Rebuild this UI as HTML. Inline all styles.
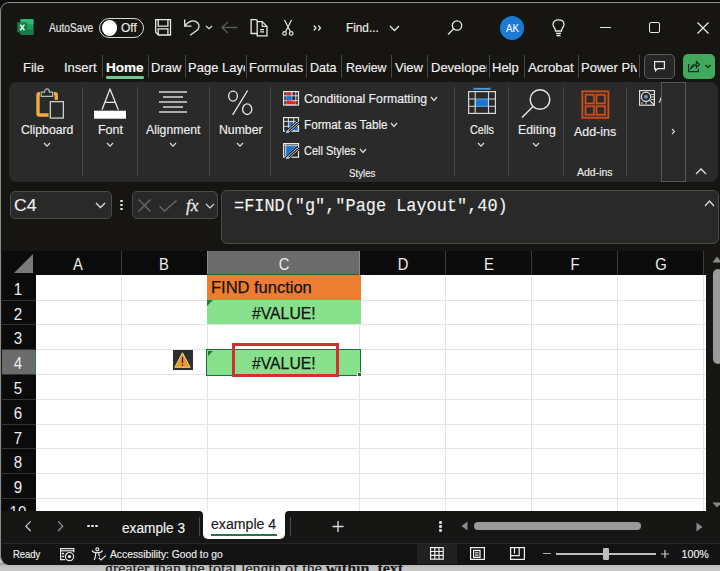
<!DOCTYPE html>
<html><head><meta charset="utf-8">
<style>
*{margin:0;padding:0;box-sizing:border-box}
html,body{width:720px;height:571px;overflow:hidden;background:#c8c8c8}
body{position:relative;font-family:"Liberation Sans",sans-serif;color:#fff}
.a{position:absolute}
.t{position:absolute;white-space:nowrap;line-height:1;-webkit-text-stroke:0.15px currentColor}
svg{position:absolute;overflow:visible}
</style></head><body>
<div class="a" style="left:0px;top:563px;width:720px;height:8px;background:linear-gradient(#8a8a8a,#c0c0c0 35%,#c8c8c8);"></div>
<div class="t" style="left:105.00px;top:560.80px;font-size:16px;color:#151515;font-weight:400;font-family:'Liberation Serif';">greater than the total length of the <b>within_text.</b></div>
<div class="a" style="left:0px;top:0px;width:720px;height:40px;background:#0a0a0a;"></div>
<div class="a" style="left:0;top:2px;width:740px;height:563px;background:#171512;border-radius:9px 0 0 9px;border-top:1.2px solid #8f8f8f;border-left:1.5px solid #8a8a8a"></div>
<svg style="left:17px;top:19px" width="17" height="16" viewBox="0 0 17 16" ><rect x="3.5" y="0" width="13" height="16" rx="1.2" fill="#1f9a5c"/>
<rect x="3.5" y="0" width="13" height="5.3" rx="1" fill="#2fb874"/>
<rect x="3.5" y="10.7" width="13" height="5.3" rx="1" fill="#177a45"/>
<rect x="0.3" y="3.2" width="10" height="10.4" rx="1.2" fill="#138048"/>
<path d="M3.2 5.6 L7.4 11.2 M7.4 5.6 L3.2 11.2" stroke="#e8fff0" stroke-width="1.5"/></svg>
<div class="t" style="left:49.00px;top:21.84px;font-size:12px;color:#e6e6e6;font-weight:400;font-family:'Liberation Sans';transform:scaleX(0.85);transform-origin:0 0;">AutoSave</div>
<div class="a" style="left:99px;top:18px;width:44.5px;height:20px;border:1.3px solid #d8d8d8;border-radius:10px"></div>
<div class="a" style="left:101.8px;top:20.3px;width:15.4px;height:15.4px;background:#fff;border-radius:50%"></div>
<div class="t" style="left:121.00px;top:21.84px;font-size:12px;color:#eaeaea;font-weight:400;font-family:'Liberation Sans';">Off</div>
<svg style="left:155px;top:19px" width="17" height="17" viewBox="0 0 17 17" fill="none" stroke="#e8e8e8" stroke-width="1.3"><path d="M0.7 0.7 H15.5 V16 H3.5 L0.7 13.2 Z"/><path d="M3.2 0.7 V7.2 H12.9 V0.7"/><path d="M3.2 16 V9.9 H12.9 V16"/></svg>
<svg style="left:183px;top:19px" width="18" height="17" viewBox="0 0 18 17" fill="none" stroke="#e8e8e8" stroke-width="1.3"><path d="M1.7 0.4 V7.2 H8.5"/><path d="M2.3 6.7 C4.5 3 9 1.2 12.5 2.3 C16 3.5 17 7.5 15 10.5 L7.2 16.2"/></svg>
<svg style="left:204.5px;top:24.7px" width="8" height="4.8" viewBox="0 0 8 4.8" fill="none" stroke="#e0e0e0" stroke-width="1.2"><path d="M1 1 L4.0 3.8 L7 1"/></svg>
<svg style="left:221px;top:21px" width="17" height="13" viewBox="0 0 17 13" fill="none" stroke="#5a5a5a" stroke-width="1.3"><path d="M7 1 L1 6.5 L7 12 M1 6.5 H16.5"/></svg>
<svg style="left:250px;top:19px" width="18" height="17" viewBox="0 0 18 17" fill="none" stroke="#e8e8e8" stroke-width="1.3"><path d="M7.2 14.5 H1.1 V0.6 H5.5 Q7.2 0.6 7.2 2.3"/><path d="M7.2 2.6 H12.2 L17 7.4 V16.8 H7.2 Z"/><path d="M12.2 2.6 V7.4 H17" stroke-width="1.1"/><path d="M10 10.7 H14 M10 12.9 H14" stroke-width="1.2"/></svg>
<svg style="left:282px;top:19px" width="12" height="17" viewBox="0 0 12 17" fill="none" stroke="#e8e8e8" stroke-width="1.2"><path d="M2.5 1 L8.3 12.6 M9.5 1 L3.7 12.6"/><circle cx="2.6" cy="14.4" r="1.8"/><circle cx="9.2" cy="14.4" r="1.8"/></svg>
<svg style="left:313px;top:25px" width="9" height="6" viewBox="0 0 9 6" fill="none" stroke="#e8e8e8" stroke-width="1.2"><path d="M0.8 0.5 L3 3 L0.8 5.5 M5.3 0.5 L7.5 3 L5.3 5.5"/></svg>
<div class="t" style="left:346.00px;top:22.34px;font-size:12px;color:#ececec;font-weight:400;font-family:'Liberation Sans';transform:scaleX(0.98);transform-origin:0 0;">Find...</div>
<svg style="left:389px;top:25px" width="11" height="7" viewBox="0 0 11 7" fill="none" stroke="#e8e8e8" stroke-width="1.3"><path d="M1 1 L5.5 5.5 L10 1"/></svg>
<svg style="left:447px;top:20px" width="16" height="15" viewBox="0 0 16 15" fill="none" stroke="#e8e8e8" stroke-width="1.3"><circle cx="10" cy="5.5" r="4.7"/><path d="M6.6 8.9 L1 14.5"/></svg>
<div class="a" style="left:499.8px;top:15.8px;width:24.4px;height:24.4px;background:#1a7ad6;border-radius:50%"></div>
<div class="t" style="left:505.50px;top:22.69px;font-size:11px;color:#f4f8ff;font-weight:400;font-family:'Liberation Sans';transform:scaleX(0.88);transform-origin:0 0;">AK</div>
<svg style="left:552px;top:19px" width="13" height="18" viewBox="0 0 13 18" fill="none" stroke="#e8e8e8" stroke-width="1.3"><path d="M3.5 12 C3.5 9 1 8 1 5.5 C1 2.5 3.5 0.8 6.5 0.8 C9.5 0.8 12 2.5 12 5.5 C12 8 9.5 9 9.5 12 Z"/><path d="M4 14.3 H9 M4.5 16.5 H8.5"/></svg>
<div class="a" style="left:600px;top:26.5px;width:11px;height:1.3px;background:#e8e8e8;"></div>
<div class="a" style="left:648.5px;top:22px;width:11.3px;height:11px;border:1.3px solid #e8e8e8;border-radius:2px"></div>
<svg style="left:697px;top:22px" width="12" height="12" viewBox="0 0 12 12" fill="none" stroke="#e8e8e8" stroke-width="1.3"><path d="M0.5 0.5 L11.5 11.5 M11.5 0.5 L0.5 11.5"/></svg>
<div class="t" style="left:23.00px;top:61.30px;font-size:13px;color:#efefef;font-weight:400;font-family:'Liberation Sans';">File</div>
<div class="t" style="left:64.00px;top:61.30px;font-size:13px;color:#efefef;font-weight:400;font-family:'Liberation Sans';">Insert</div>
<div class="a" style="left:102px;top:55px;width:1px;height:23px;background:#464646;"></div>
<div class="t" style="left:106.00px;top:61.30px;font-size:13px;color:#ffffff;font-weight:700;font-family:'Liberation Sans';transform:scaleX(1.04);transform-origin:0 0;">Home</div>
<div class="a" style="left:148px;top:55px;width:1px;height:23px;background:#464646;"></div>
<div class="t" style="left:151.00px;top:61.30px;font-size:13px;color:#efefef;font-weight:400;font-family:'Liberation Sans';">Draw</div>
<div class="a" style="left:185px;top:55px;width:1px;height:23px;background:#464646;"></div>
<div class="a" style="left:188px;top:55px;width:57px;height:25px;overflow:hidden">
<div class="t" style="left:0.00px;top:6.30px;font-size:13px;color:#efefef;font-weight:400;font-family:'Liberation Sans';">Page Layout</div>
</div>
<div class="a" style="left:246px;top:55px;width:1px;height:23px;background:#464646;"></div>
<div class="t" style="left:249.00px;top:61.30px;font-size:13px;color:#efefef;font-weight:400;font-family:'Liberation Sans';">Formulas</div>
<div class="a" style="left:306px;top:55px;width:1px;height:23px;background:#464646;"></div>
<div class="t" style="left:310.00px;top:61.30px;font-size:13px;color:#efefef;font-weight:400;font-family:'Liberation Sans';transform:scaleX(0.96);transform-origin:0 0;">Data</div>
<div class="a" style="left:341px;top:55px;width:1px;height:23px;background:#464646;"></div>
<div class="t" style="left:346.00px;top:61.30px;font-size:13px;color:#efefef;font-weight:400;font-family:'Liberation Sans';transform:scaleX(0.95);transform-origin:0 0;">Review</div>
<div class="a" style="left:391px;top:55px;width:1px;height:23px;background:#464646;"></div>
<div class="t" style="left:395.00px;top:61.30px;font-size:13px;color:#efefef;font-weight:400;font-family:'Liberation Sans';">View</div>
<div class="a" style="left:427px;top:55px;width:1px;height:23px;background:#464646;"></div>
<div class="a" style="left:431px;top:55px;width:56px;height:25px;overflow:hidden">
<div class="t" style="left:0.00px;top:6.30px;font-size:13px;color:#efefef;font-weight:400;font-family:'Liberation Sans';">Developer</div>
</div>
<div class="a" style="left:489px;top:55px;width:1px;height:23px;background:#464646;"></div>
<div class="t" style="left:492.00px;top:61.30px;font-size:13px;color:#efefef;font-weight:400;font-family:'Liberation Sans';">Help</div>
<div class="a" style="left:524px;top:55px;width:1px;height:23px;background:#464646;"></div>
<div class="t" style="left:528.00px;top:61.30px;font-size:13px;color:#efefef;font-weight:400;font-family:'Liberation Sans';transform:scaleX(1.02);transform-origin:0 0;">Acrobat</div>
<div class="a" style="left:578px;top:55px;width:1px;height:23px;background:#464646;"></div>
<div class="a" style="left:581px;top:55px;width:56px;height:25px;overflow:hidden">
<div class="t" style="left:0.00px;top:6.30px;font-size:13px;color:#efefef;font-weight:400;font-family:'Liberation Sans';">Power Pivot</div>
</div>
<div class="a" style="left:639px;top:55px;width:1px;height:23px;background:#464646;"></div>
<div class="a" style="left:106px;top:76.3px;width:38px;height:2.3px;background:#74c692;border-radius:1.2px"></div>
<div class="a" style="left:644px;top:54px;width:31px;height:25px;border:1px solid #5a5a5a;border-radius:5px;background:#262626"></div>
<svg style="left:654px;top:61px" width="11" height="11" viewBox="0 0 11 11" fill="none" stroke="#ececec" stroke-width="1.2"><path d="M0.6 0.6 H10.4 V7.6 H3.5 L1.5 9.8 V7.6 H0.6 Z"/></svg>
<div class="a" style="left:683px;top:54px;width:31.5px;height:25px;background:#40a95d;border-radius:5px"></div>
<svg style="left:688px;top:60px" width="24" height="13" viewBox="0 0 24 13" fill="none" stroke="#15301e" stroke-width="1.2"><path d="M0.6 4 V11.6 H10.4 V9"/><path d="M2.5 9.5 C3 6 5.5 4 8.5 4 V1.5 L11.5 4.5 L8.5 7.5 V5.5 C6 5.5 4 7 2.5 9.5 Z"/><path d="M17.5 5 L20 7.5 L22.5 5" stroke-width="1.3"/></svg>
<div class="a" style="left:9px;top:82px;width:709px;height:100px;background:#2a2a2a;border-radius:8px"></div>
<div class="a" style="left:82px;top:87px;width:1px;height:89px;background:#464646;"></div>
<div class="a" style="left:137px;top:87px;width:1px;height:89px;background:#464646;"></div>
<div class="a" style="left:209px;top:87px;width:1px;height:89px;background:#464646;"></div>
<div class="a" style="left:270px;top:87px;width:1px;height:89px;background:#464646;"></div>
<div class="a" style="left:454px;top:87px;width:1px;height:89px;background:#464646;"></div>
<div class="a" style="left:508px;top:87px;width:1px;height:89px;background:#464646;"></div>
<div class="a" style="left:563px;top:87px;width:1px;height:89px;background:#464646;"></div>
<div class="a" style="left:626px;top:87px;width:1px;height:89px;background:#464646;"></div>
<svg style="left:36px;top:88px" width="29" height="31" viewBox="0 0 29 31" fill="none"><rect x="2" y="5.7" width="18.3" height="21.3" rx="1.2" stroke="#eeac45" stroke-width="3.4"/>
<rect x="14.35" y="13.65" width="13" height="16.4" stroke="#2a2a2a" stroke-width="3.5" fill="#2a2a2a"/>
<rect x="14.35" y="13.65" width="13" height="16.4" stroke="#cfcfcf" stroke-width="1.3" fill="#2a2a2a"/>
<path d="M5.2 8.3 V4.2 H8.6 C8.6 1.8 9.8 0.9 11 0.9 C12.2 0.9 13.4 1.8 13.4 4.2 H16.6 V8.3 Z" stroke="#2a2a2a" stroke-width="2.5" fill="#2a2a2a"/>
<path d="M5.2 8.3 V4.2 H8.6 C8.6 1.8 9.8 0.9 11 0.9 C12.2 0.9 13.4 1.8 13.4 4.2 H16.6 V8.3 Z" stroke="#b8b8b8" stroke-width="1.2" fill="#2a2a2a"/></svg>
<div class="t" style="left:21.00px;top:124.04px;font-size:12px;color:#f0f0f0;font-weight:400;font-family:'Liberation Sans';transform:scaleX(1.02);transform-origin:0 0;">Clipboard</div>
<svg style="left:43.2px;top:141.6px" width="8" height="5.2" viewBox="0 0 8 5.2" fill="none" stroke="#dcdcdc" stroke-width="1.2"><path d="M1 1 L4.0 4.2 L7 1"/></svg>
<svg style="left:94px;top:88px" width="33" height="32" viewBox="0 0 33 32" fill="none"><path d="M8 21.8 L16 1 L24.3 21.8 M10.9 14.3 H21.4" stroke="#e8e8e8" stroke-width="1.3" stroke-linejoin="round"/><rect x="0" y="22.7" width="32" height="8" fill="#fff"/></svg>
<div class="t" style="left:98.00px;top:124.04px;font-size:12px;color:#f0f0f0;font-weight:400;font-family:'Liberation Sans';transform:scaleX(1.04);transform-origin:0 0;">Font</div>
<svg style="left:106.2px;top:141.6px" width="8" height="5.2" viewBox="0 0 8 5.2" fill="none" stroke="#dcdcdc" stroke-width="1.2"><path d="M1 1 L4.0 4.2 L7 1"/></svg>
<svg style="left:159px;top:91px" width="28" height="22" viewBox="0 0 28 22" fill="none" stroke="#d8d8d8" stroke-width="1.3"><path d="M0 1 H28 M4 6 H24 M0 11 H28 M4 16 H24 M0 21 H28"/></svg>
<div class="t" style="left:145.50px;top:124.04px;font-size:12px;color:#f0f0f0;font-weight:400;font-family:'Liberation Sans';transform:scaleX(1.02);transform-origin:0 0;">Alignment</div>
<svg style="left:169.2px;top:141.6px" width="8" height="5.2" viewBox="0 0 8 5.2" fill="none" stroke="#dcdcdc" stroke-width="1.2"><path d="M1 1 L4.0 4.2 L7 1"/></svg>
<svg style="left:228px;top:90px" width="26" height="26" viewBox="0 0 26 26" fill="none" stroke="#e8e8e8" stroke-width="1.3"><ellipse cx="5" cy="6.1" rx="4.4" ry="5"/><ellipse cx="19.2" cy="19.2" rx="4.6" ry="5.3"/><path d="M19.6 0.5 L4.7 24.9"/></svg>
<div class="t" style="left:218.50px;top:124.04px;font-size:12px;color:#f0f0f0;font-weight:400;font-family:'Liberation Sans';transform:scaleX(1.02);transform-origin:0 0;">Number</div>
<svg style="left:236.2px;top:141.6px" width="8" height="5.2" viewBox="0 0 8 5.2" fill="none" stroke="#dcdcdc" stroke-width="1.2"><path d="M1 1 L4.0 4.2 L7 1"/></svg>
<svg style="left:283px;top:90.6px" width="17" height="15" viewBox="0 0 17 15" ><rect x="3.1" y="0.6" width="5.8" height="4.2" fill="#e02424" stroke="#ff7070" stroke-width="0.8"/>
<rect x="3.1" y="4.8" width="5.8" height="4.9" fill="#1f6fcf" stroke="#7ab8f5" stroke-width="0.8"/>
<rect x="3.1" y="9.7" width="9.7" height="4.3" fill="#e02424" stroke="#ff7070" stroke-width="0.8"/>
<path d="M0.6 4.8 H3.1 M8.9 4.8 H15.5 M0.6 9.7 H3.1 M8.9 9.7 H15.5 M8.9 0.6 V4.8 M12.8 0.6 V9.7" fill="none" stroke="#d8d8d8" stroke-width="1"/>
<rect x="0.6" y="0.6" width="14.9" height="13.4" fill="none" stroke="#e6e6e6" stroke-width="1.2"/></svg>
<div class="t" style="left:304.00px;top:92.89px;font-size:12.3px;color:#f0f0f0;font-weight:400;font-family:'Liberation Sans';transform:scaleX(0.995);transform-origin:0 0;">Conditional Formatting</div>
<svg style="left:430px;top:95.5px" width="8" height="5.5" viewBox="0 0 8 5.5" fill="none" stroke="#dcdcdc" stroke-width="1.2"><path d="M1 1 L4.0 4.5 L7 1"/></svg>
<svg style="left:283px;top:117px" width="17" height="15" viewBox="0 0 17 15" ><rect x="5.4" y="4.4" width="10" height="9.7" fill="#1f6fcf"/>
<path d="M0.6 4.4 H15.5 M0.6 9.3 H15.5 M5.4 0.6 V14.2 M10.7 0.6 V14.2" fill="none" stroke="#d8d8d8" stroke-width="1"/>
<rect x="0.6" y="0.6" width="14.9" height="13.6" fill="none" stroke="#e6e6e6" stroke-width="1.2"/>
<path d="M2.5 14.8 L14.2 4.2 L16.3 6.4 L5 16.8 Z" fill="#2a2a2a" stroke="#111" stroke-width="1.2"/>
<path d="M3.5 14.6 L14.2 5 L15.6 6.4 L5.2 15.8 Z" fill="#222" stroke="#e8e8e8" stroke-width="0.9"/>
<path d="M2.6 15.2 L5 12.9 L6.3 14.3 L3.8 16.6 Z" fill="#8cc4ff"/></svg>
<div class="t" style="left:304.00px;top:118.89px;font-size:12.3px;color:#f0f0f0;font-weight:400;font-family:'Liberation Sans';transform:scaleX(0.95);transform-origin:0 0;">Format as Table</div>
<svg style="left:390px;top:121.5px" width="8" height="5.5" viewBox="0 0 8 5.5" fill="none" stroke="#dcdcdc" stroke-width="1.2"><path d="M1 1 L4.0 4.5 L7 1"/></svg>
<svg style="left:283px;top:143px" width="17" height="15" viewBox="0 0 17 15" ><path d="M2.8 2.8 H14 L4 12.5 H2.8 Z" fill="#1f6fcf" stroke="#7ab8f5" stroke-width="0.8"/>
<path d="M0.6 2.2 H15.5 M2.6 0.6 V14.2" fill="none" stroke="#cfcfcf" stroke-width="0.9"/>
<rect x="0.6" y="0.6" width="14.9" height="13.6" fill="none" stroke="#e6e6e6" stroke-width="1.2"/>
<path d="M2.5 14.8 L14.2 4.2 L16.3 6.4 L5 16.8 Z" fill="#2a2a2a" stroke="#111" stroke-width="1.2"/>
<path d="M3.5 14.6 L14.2 5 L15.6 6.4 L5.2 15.8 Z" fill="#222" stroke="#e8e8e8" stroke-width="0.9"/>
<path d="M2.6 15.2 L5 12.9 L6.3 14.3 L3.8 16.6 Z" fill="#8cc4ff"/></svg>
<div class="t" style="left:304.00px;top:144.89px;font-size:12.3px;color:#f0f0f0;font-weight:400;font-family:'Liberation Sans';transform:scaleX(0.89);transform-origin:0 0;">Cell Styles</div>
<svg style="left:358.5px;top:147.5px" width="8" height="5.5" viewBox="0 0 8 5.5" fill="none" stroke="#dcdcdc" stroke-width="1.2"><path d="M1 1 L4.0 4.5 L7 1"/></svg>
<div class="t" style="left:349.20px;top:167.79px;font-size:11px;color:#eeeeee;font-weight:400;font-family:'Liberation Sans';transform:scaleX(0.88);transform-origin:0 0;">Styles</div>
<svg style="left:468px;top:86px" width="28" height="28" viewBox="0 0 28 28" fill="none"><path d="M6.5 2.8 H21.5" stroke="#4a9ee6" stroke-width="1.8"/><path d="M6 1.5 V4 M22 1.5 V4" stroke="#4a9ee6" stroke-width="1"/>
<rect x="7.2" y="13" width="13.3" height="7.3" fill="#1f74d0" stroke="#5aaaf0" stroke-width="1"/>
<rect x="0.6" y="5.6" width="26.8" height="21.8" stroke="#d8d8d8" stroke-width="1.2"/>
<path d="M0.6 13 H7.2 M20.5 13 H27.4 M0.6 20.3 H7.2 M20.5 20.3 H27.4 M7.2 5.6 V13 M7.2 20.3 V27.4 M20.5 5.6 V13 M20.5 20.3 V27.4 M7.2 5.6 V27.4 M20.5 5.6 V27.4" stroke="#d8d8d8" stroke-width="1.1"/></svg>
<div class="t" style="left:469.50px;top:124.04px;font-size:12px;color:#f0f0f0;font-weight:400;font-family:'Liberation Sans';transform:scaleX(0.9);transform-origin:0 0;">Cells</div>
<svg style="left:477.2px;top:141.6px" width="8" height="5.2" viewBox="0 0 8 5.2" fill="none" stroke="#dcdcdc" stroke-width="1.2"><path d="M1 1 L4.0 4.2 L7 1"/></svg>
<svg style="left:521px;top:89px" width="30" height="29" viewBox="0 0 30 29" fill="none" stroke="#e8e8e8" stroke-width="1.4"><circle cx="19" cy="10.5" r="9.8"/><path d="M12 17.5 L1 28.5"/></svg>
<div class="t" style="left:517.50px;top:124.04px;font-size:12px;color:#f0f0f0;font-weight:400;font-family:'Liberation Sans';transform:scaleX(1.03);transform-origin:0 0;">Editing</div>
<svg style="left:532.2px;top:141.6px" width="8" height="5.2" viewBox="0 0 8 5.2" fill="none" stroke="#dcdcdc" stroke-width="1.2"><path d="M1 1 L4.0 4.2 L7 1"/></svg>
<svg style="left:581px;top:90px" width="30" height="30" viewBox="0 0 30 30" fill="none"><g stroke="#9a3a16" stroke-width="2.4"><rect x="1.3" y="1.3" width="26" height="26.5"/><rect x="4.6" y="4.8" width="8.4" height="8.6"/><rect x="15.6" y="4.8" width="8.4" height="8.6"/><rect x="4.6" y="16.2" width="8.4" height="8.6"/><rect x="15.6" y="16.2" width="8.4" height="8.6"/></g><g stroke="#cf6236" stroke-width="0.7"><rect x="1.3" y="1.3" width="26" height="26.5"/><rect x="4.6" y="4.8" width="8.4" height="8.6"/><rect x="15.6" y="4.8" width="8.4" height="8.6"/><rect x="4.6" y="16.2" width="8.4" height="8.6"/><rect x="15.6" y="16.2" width="8.4" height="8.6"/></g></svg>
<div class="t" style="left:573.70px;top:124.50px;font-size:13px;color:#f0f0f0;font-weight:400;font-family:'Liberation Sans';transform:scaleX(0.955);transform-origin:0 0;">Add-ins</div>
<div class="t" style="left:576.70px;top:167.49px;font-size:11px;color:#eeeeee;font-weight:400;font-family:'Liberation Sans';transform:scaleX(0.955);transform-origin:0 0;">Add-ins</div>
<svg style="left:639px;top:90px" width="17" height="17" viewBox="0 0 17 17" fill="none" stroke="#e0e0e0" stroke-width="1.2"><rect x="0.6" y="0.6" width="14.8" height="14.6"/><path d="M12 4.5 H15 M12 7 H15 M12 9.5 H15 M2 13 H4 M6 13 H8" stroke-width="0.9"/><circle cx="7" cy="6.8" r="4.6" fill="#2a2a2a"/><rect x="5.2" y="5.2" width="3.4" height="3.2" fill="#6f9fd0" stroke="none"/><path d="M10.4 10.2 L15.2 15"/></svg>
<svg style="left:658px;top:95px" width="5" height="9" viewBox="0 0 5 9" fill="none" stroke="#d8d8d8" stroke-width="1.2"><path d="M3.8 1.3 L1.2 7.7"/></svg>
<div class="a" style="left:661px;top:82px;width:25px;height:100px;border:1px solid #575757;background:#2a2a2a"></div>
<svg style="left:671px;top:128px" width="5" height="7" viewBox="0 0 5 7" fill="none" stroke="#dddddd" stroke-width="1.1"><path d="M1 1 L3.5 3.5 L1 6"/></svg>
<svg style="left:695px;top:168px" width="12" height="7" viewBox="0 0 12 7" fill="none" stroke="#dddddd" stroke-width="1.3"><path d="M1 6 L6 1 L11 6"/></svg>
<div class="a" style="left:9.5px;top:191px;width:102px;height:28px;background:#292929;border:1px solid #4a4a4a;border-radius:5px"></div>
<div class="t" style="left:14.40px;top:197.76px;font-size:16px;color:#f0f0f0;font-weight:400;font-family:'Liberation Sans';transform:scaleX(1.1);transform-origin:0 0;">C4</div>
<svg style="left:95px;top:202px" width="11" height="7" viewBox="0 0 11 7" fill="none" stroke="#e0e0e0" stroke-width="1.3"><path d="M1 1 L5.5 5.5 L10 1"/></svg>
<div class="a" style="left:120.4px;top:200px;width:2.2px;height:2.2px;background:#dddddd;border-radius:50%"></div>
<div class="a" style="left:120.4px;top:204px;width:2.2px;height:2.2px;background:#dddddd;border-radius:50%"></div>
<div class="a" style="left:120.4px;top:208px;width:2.2px;height:2.2px;background:#dddddd;border-radius:50%"></div>
<div class="a" style="left:131.5px;top:191px;width:86px;height:28px;background:#292929;border:1px solid #4a4a4a;border-radius:5px"></div>
<svg style="left:138px;top:199px" width="13" height="13" viewBox="0 0 13 13" fill="none" stroke="#6a6a6a" stroke-width="1.3"><path d="M0.5 0.5 L12.5 12.5 M12.5 0.5 L0.5 12.5"/></svg>
<svg style="left:159px;top:200px" width="18" height="12" viewBox="0 0 18 12" fill="none" stroke="#6a6a6a" stroke-width="1.3"><path d="M0.5 6 L5.5 11 L17.5 0.5"/></svg>
<div class="t" style="left:185.50px;top:197.26px;font-size:17px;color:#e8e8e8;font-weight:400;font-family:'Liberation Serif';transform:scaleX(1.02);transform-origin:0 0;font-style:italic;-webkit-text-stroke:0.3px #e8e8e8;">fx</div>
<svg style="left:205px;top:203px" width="10" height="6" viewBox="0 0 10 6" fill="none" stroke="#dddddd" stroke-width="1.2"><path d="M1 1 L5 5 L9 1"/></svg>
<div class="a" style="left:221px;top:190px;width:498px;height:54px;background:#292929;border:1px solid #4a4a4a;border-radius:6px"></div>
<div class="t" style="left:234.00px;top:198.32px;font-size:18.5px;color:#f2f2f2;font-weight:400;font-family:'Liberation Mono';transform:scaleX(0.913);transform-origin:0 0;">=FIND("g","Page Layout",40)</div>
<svg style="left:704px;top:200px" width="11" height="7" viewBox="0 0 11 7" fill="none" stroke="#dddddd" stroke-width="1.3"><path d="M1 6 L5.5 1 L10 6"/></svg>
<div class="a" style="left:1px;top:246px;width:719px;height:5px;background:#171512;"></div>
<div class="a" style="left:1.5px;top:251px;width:34px;height:24px;background:#0b0b0b;"></div>
<svg style="left:14px;top:254px" width="19" height="19" viewBox="0 0 19 19" ><path d="M19 0 V19 H0 Z" fill="#7a7a7a"/></svg>
<div class="a" style="left:36px;top:275px;width:670px;height:236px;background:#ffffff;"></div>
<div class="a" style="left:35px;top:251px;width:86px;height:24px;background:#0b0b0b;"></div>
<div class="t" style="left:68.00px;top:256.22px;font-size:16.4px;color:#eeeeee;font-weight:400;font-family:'Liberation Sans';width:20px;text-align:center;transform:scaleX(0.9);-webkit-text-stroke:0;">A</div>
<div class="a" style="left:121px;top:251px;width:86px;height:24px;background:#0b0b0b;"></div>
<div class="t" style="left:154.00px;top:256.22px;font-size:16.4px;color:#eeeeee;font-weight:400;font-family:'Liberation Sans';width:20px;text-align:center;transform:scaleX(0.9);-webkit-text-stroke:0;">B</div>
<div class="a" style="left:207px;top:251px;width:152px;height:24px;background:#6b6b6b;"></div>
<div class="t" style="left:273.50px;top:256.22px;font-size:16.4px;color:#eeeeee;font-weight:400;font-family:'Liberation Sans';width:20px;text-align:center;transform:scaleX(0.9);-webkit-text-stroke:0;">C</div>
<div class="a" style="left:359px;top:251px;width:86px;height:24px;background:#0b0b0b;"></div>
<div class="t" style="left:393.00px;top:256.22px;font-size:16.4px;color:#eeeeee;font-weight:400;font-family:'Liberation Sans';width:20px;text-align:center;transform:scaleX(0.9);-webkit-text-stroke:0;">D</div>
<div class="a" style="left:445px;top:251px;width:86px;height:24px;background:#0b0b0b;"></div>
<div class="t" style="left:479.00px;top:256.22px;font-size:16.4px;color:#eeeeee;font-weight:400;font-family:'Liberation Sans';width:20px;text-align:center;transform:scaleX(0.9);-webkit-text-stroke:0;">E</div>
<div class="a" style="left:531px;top:251px;width:86px;height:24px;background:#0b0b0b;"></div>
<div class="t" style="left:565.00px;top:256.22px;font-size:16.4px;color:#eeeeee;font-weight:400;font-family:'Liberation Sans';width:20px;text-align:center;transform:scaleX(0.9);-webkit-text-stroke:0;">F</div>
<div class="a" style="left:617px;top:251px;width:86px;height:24px;background:#0b0b0b;"></div>
<div class="t" style="left:651.00px;top:256.22px;font-size:16.4px;color:#eeeeee;font-weight:400;font-family:'Liberation Sans';width:20px;text-align:center;transform:scaleX(0.9);-webkit-text-stroke:0;">G</div>
<div class="a" style="left:121px;top:251px;width:1px;height:24px;background:#3a3a3a;"></div>
<div class="a" style="left:207px;top:251px;width:1px;height:24px;background:#8a8a8a;"></div>
<div class="a" style="left:359px;top:251px;width:1px;height:24px;background:#8a8a8a;"></div>
<div class="a" style="left:445px;top:251px;width:1px;height:24px;background:#3a3a3a;"></div>
<div class="a" style="left:531px;top:251px;width:1px;height:24px;background:#3a3a3a;"></div>
<div class="a" style="left:617px;top:251px;width:1px;height:24px;background:#3a3a3a;"></div>
<div class="a" style="left:703px;top:251px;width:1px;height:24px;background:#3a3a3a;"></div>
<div class="a" style="left:207px;top:274px;width:152px;height:1px;background:#2b5c3b;"></div>
<div class="a" style="left:1.5px;top:275.3px;width:34px;height:24.80000000000001px;background:#0b0b0b;"></div>
<div class="t" style="left:8.20px;top:280.82px;font-size:16.4px;color:#eeeeee;font-weight:400;font-family:'Liberation Sans';width:20px;text-align:center;transform:scaleX(0.92);-webkit-text-stroke:0;">1</div>
<div class="a" style="left:1.5px;top:300.1px;width:34px;height:24.80000000000001px;background:#0b0b0b;"></div>
<div class="a" style="left:1.5px;top:299.6px;width:34px;height:1px;background:#333333;"></div>
<div class="t" style="left:8.20px;top:305.62px;font-size:16.4px;color:#eeeeee;font-weight:400;font-family:'Liberation Sans';width:20px;text-align:center;transform:scaleX(0.92);-webkit-text-stroke:0;">2</div>
<div class="a" style="left:1.5px;top:324.90000000000003px;width:34px;height:24.80000000000001px;background:#0b0b0b;"></div>
<div class="a" style="left:1.5px;top:324.40000000000003px;width:34px;height:1px;background:#333333;"></div>
<div class="t" style="left:8.20px;top:330.42px;font-size:16.4px;color:#eeeeee;font-weight:400;font-family:'Liberation Sans';width:20px;text-align:center;transform:scaleX(0.92);-webkit-text-stroke:0;">3</div>
<div class="a" style="left:1.5px;top:349.70000000000005px;width:34px;height:24.799999999999955px;background:#6b6b6b;"></div>
<div class="a" style="left:1.5px;top:349.20000000000005px;width:34px;height:1px;background:#333333;"></div>
<div class="t" style="left:8.20px;top:355.22px;font-size:16.4px;color:#eeeeee;font-weight:400;font-family:'Liberation Sans';width:20px;text-align:center;transform:scaleX(0.92);-webkit-text-stroke:0;">4</div>
<div class="a" style="left:1.5px;top:374.5px;width:34px;height:24.80000000000001px;background:#0b0b0b;"></div>
<div class="a" style="left:1.5px;top:374.0px;width:34px;height:1px;background:#333333;"></div>
<div class="t" style="left:8.20px;top:380.02px;font-size:16.4px;color:#eeeeee;font-weight:400;font-family:'Liberation Sans';width:20px;text-align:center;transform:scaleX(0.92);-webkit-text-stroke:0;">5</div>
<div class="a" style="left:1.5px;top:399.3px;width:34px;height:24.80000000000001px;background:#0b0b0b;"></div>
<div class="a" style="left:1.5px;top:398.8px;width:34px;height:1px;background:#333333;"></div>
<div class="t" style="left:8.20px;top:404.82px;font-size:16.4px;color:#eeeeee;font-weight:400;font-family:'Liberation Sans';width:20px;text-align:center;transform:scaleX(0.92);-webkit-text-stroke:0;">6</div>
<div class="a" style="left:1.5px;top:424.1px;width:34px;height:24.799999999999955px;background:#0b0b0b;"></div>
<div class="a" style="left:1.5px;top:423.6px;width:34px;height:1px;background:#333333;"></div>
<div class="t" style="left:8.20px;top:429.62px;font-size:16.4px;color:#eeeeee;font-weight:400;font-family:'Liberation Sans';width:20px;text-align:center;transform:scaleX(0.92);-webkit-text-stroke:0;">7</div>
<div class="a" style="left:1.5px;top:448.9px;width:34px;height:24.800000000000068px;background:#0b0b0b;"></div>
<div class="a" style="left:1.5px;top:448.4px;width:34px;height:1px;background:#333333;"></div>
<div class="t" style="left:8.20px;top:454.42px;font-size:16.4px;color:#eeeeee;font-weight:400;font-family:'Liberation Sans';width:20px;text-align:center;transform:scaleX(0.92);-webkit-text-stroke:0;">8</div>
<div class="a" style="left:1.5px;top:473.70000000000005px;width:34px;height:24.799999999999955px;background:#0b0b0b;"></div>
<div class="a" style="left:1.5px;top:473.20000000000005px;width:34px;height:1px;background:#333333;"></div>
<div class="t" style="left:8.20px;top:479.22px;font-size:16.4px;color:#eeeeee;font-weight:400;font-family:'Liberation Sans';width:20px;text-align:center;transform:scaleX(0.92);-webkit-text-stroke:0;">9</div>
<div class="a" style="left:1.5px;top:498.5px;width:34px;height:24.799999999999955px;background:#0b0b0b;"></div>
<div class="a" style="left:1.5px;top:498.0px;width:34px;height:1px;background:#333333;"></div>
<div class="t" style="left:8.20px;top:504.02px;font-size:16.4px;color:#eeeeee;font-weight:400;font-family:'Liberation Sans';width:20px;text-align:center;transform:scaleX(0.92);-webkit-text-stroke:0;">10</div>
<div class="a" style="left:35px;top:349.5px;width:1px;height:25px;background:#2d7a4a;"></div>
<div class="a" style="left:36px;top:299.6px;width:670px;height:1px;background:#e4e4e4;"></div>
<div class="a" style="left:36px;top:324.40000000000003px;width:670px;height:1px;background:#e4e4e4;"></div>
<div class="a" style="left:36px;top:349.20000000000005px;width:670px;height:1px;background:#e4e4e4;"></div>
<div class="a" style="left:36px;top:374.0px;width:670px;height:1px;background:#e4e4e4;"></div>
<div class="a" style="left:36px;top:398.8px;width:670px;height:1px;background:#e4e4e4;"></div>
<div class="a" style="left:36px;top:423.6px;width:670px;height:1px;background:#e4e4e4;"></div>
<div class="a" style="left:36px;top:448.4px;width:670px;height:1px;background:#e4e4e4;"></div>
<div class="a" style="left:36px;top:473.20000000000005px;width:670px;height:1px;background:#e4e4e4;"></div>
<div class="a" style="left:36px;top:498.0px;width:670px;height:1px;background:#e4e4e4;"></div>
<div class="a" style="left:121px;top:275px;width:1px;height:236px;background:#e4e4e4;"></div>
<div class="a" style="left:207px;top:275px;width:1px;height:236px;background:#e4e4e4;"></div>
<div class="a" style="left:359px;top:275px;width:1px;height:236px;background:#e4e4e4;"></div>
<div class="a" style="left:445px;top:275px;width:1px;height:236px;background:#e4e4e4;"></div>
<div class="a" style="left:531px;top:275px;width:1px;height:236px;background:#e4e4e4;"></div>
<div class="a" style="left:617px;top:275px;width:1px;height:236px;background:#e4e4e4;"></div>
<div class="a" style="left:703px;top:275px;width:1px;height:236px;background:#e4e4e4;"></div>
<div class="a" style="left:207px;top:275px;width:153.5px;height:24.8px;background:#ed7d31;"></div>
<div class="t" style="left:210.60px;top:280.46px;font-size:16px;color:#141414;font-weight:400;font-family:'Liberation Sans';transform:scaleX(1.03);transform-origin:0 0;-webkit-text-stroke:0.25px #141414;">FIND function</div>
<div class="a" style="left:207px;top:300.1px;width:153.5px;height:24.3px;background:#86e08c;"></div>
<svg style="left:207px;top:300.1px" width="6" height="6" viewBox="0 0 6 6" ><path d="M0 0 H6 L0 6 Z" fill="#1f7a3a"/></svg>
<div class="t" style="left:251.50px;top:305.56px;font-size:16px;color:#141414;font-weight:400;font-family:'Liberation Sans';transform:scaleX(0.985);transform-origin:0 0;-webkit-text-stroke:0.25px #141414;">#VALUE!</div>
<div class="a" style="left:206.3px;top:349.4px;width:154.7px;height:26.2px;background:#86e08c;border:1px solid #1f6b3c"></div>
<svg style="left:208px;top:351px" width="5" height="5" viewBox="0 0 5 5" ><path d="M0 0 H5 L0 5 Z" fill="#1f7a3a"/></svg>
<div class="a" style="left:357px;top:372px;width:5px;height:5px;background:#1f6b3c;border:1px solid #ffffff"></div>
<div class="a" style="left:232px;top:343.4px;width:107.4px;height:33.6px;border:3px solid #d32f2f"></div>
<div class="t" style="left:251.90px;top:355.76px;font-size:16px;color:#141414;font-weight:400;font-family:'Liberation Sans';transform:scaleX(0.985);transform-origin:0 0;-webkit-text-stroke:0.25px #141414;">#VALUE!</div>
<div class="a" style="left:173px;top:350px;width:20px;height:20px;background:#2c2e30;"></div>
<svg style="left:175px;top:352px" width="16" height="16" viewBox="0 0 16 16" ><path d="M7.5 0.8 L15.2 15.3 H-0.2 Z" fill="#e8972e" stroke="#f5d27e" stroke-linejoin="round" stroke-width="1"/><path d="M7.5 5 V11.2" stroke="#3a2510" stroke-width="1.3"/><circle cx="7.5" cy="13" r="0.8" fill="#3a2510"/></svg>
<div class="a" style="left:706px;top:246px;width:14px;height:265px;background:#171512;"></div>
<svg style="left:712px;top:256px" width="10" height="7" viewBox="0 0 10 7" ><path d="M5 0.5 L9.5 6.5 H0.5 Z" fill="#8a8a8a"/></svg>
<div class="a" style="left:712.7px;top:268.6px;width:10px;height:95.4px;background:#9a9a9a;border-radius:5px"></div>
<svg style="left:712px;top:502px" width="10" height="6" viewBox="0 0 10 6" ><path d="M0.5 0.5 H9.5 L5 5.5 Z" fill="#8a8a8a"/></svg>
<div class="a" style="left:1.5px;top:511px;width:719px;height:32px;background:#161615;"></div>
<div class="a" style="left:196px;top:511px;width:96px;height:6px;background:#ffffff;"></div>
<div class="a" style="left:196px;top:511px;width:7.2px;height:6px;background:#161615;border-top-right-radius:4px"></div>
<div class="a" style="left:285.1px;top:511px;width:7px;height:6px;background:#161615;border-top-left-radius:4px"></div>
<div class="a" style="left:203.1px;top:511px;width:82px;height:28px;background:#ffffff;border-radius:0 0 5px 5px"></div>
<svg style="left:25px;top:520.6px" width="7" height="11" viewBox="0 0 7 11" fill="none" stroke="#d0d0d0" stroke-width="1.2"><path d="M5.6 0.4 L0.9 5.2 L5.6 10"/></svg>
<svg style="left:57px;top:520.6px" width="7" height="11" viewBox="0 0 7 11" fill="none" stroke="#9c9c9c" stroke-width="1.2"><path d="M1 0.4 L5.7 5.2 L1 10"/></svg>
<div class="a" style="left:87px;top:524.5px;width:2.7px;height:2.7px;background:#e6e6e6;border-radius:50%"></div>
<div class="a" style="left:91px;top:524.5px;width:2.7px;height:2.7px;background:#e6e6e6;border-radius:50%"></div>
<div class="a" style="left:95px;top:524.5px;width:2.7px;height:2.7px;background:#e6e6e6;border-radius:50%"></div>
<div class="t" style="left:122.20px;top:520.95px;font-size:14px;color:#f0f0f0;font-weight:400;font-family:'Liberation Sans';transform:scaleX(0.975);transform-origin:0 0;">example 3</div>
<div class="a" style="left:198.5px;top:517px;width:1px;height:19px;background:#4a4a4a;"></div>
<div class="t" style="left:211.20px;top:517.45px;font-size:14px;color:#1a1a1a;font-weight:400;font-family:'Liberation Sans';transform:scaleX(1.01);transform-origin:0 0;">example 4</div>
<div class="a" style="left:211.2px;top:534px;width:65.6px;height:1.8px;background:#1e7a45;"></div>
<div class="a" style="left:289.5px;top:517px;width:1px;height:19px;background:#4a4a4a;"></div>
<svg style="left:332px;top:521px" width="12" height="11" viewBox="0 0 12 11" fill="none" stroke="#e0e0e0" stroke-width="1.3"><path d="M6 0 V11 M0.5 5.5 H11.5"/></svg>
<div class="a" style="left:439px;top:521px;width:2.6px;height:2.6px;background:#dddddd;border-radius:50%"></div>
<div class="a" style="left:439px;top:525px;width:2.6px;height:2.6px;background:#dddddd;border-radius:50%"></div>
<div class="a" style="left:439px;top:529px;width:2.6px;height:2.6px;background:#dddddd;border-radius:50%"></div>
<svg style="left:461px;top:521px" width="7" height="10" viewBox="0 0 7 10" ><path d="M6.5 0.5 V9.5 L0.5 5 Z" fill="#8a8a8a"/></svg>
<div class="a" style="left:474.2px;top:521.7px;width:166.6px;height:8.6px;background:#9a9a9a;border-radius:4.3px"></div>
<svg style="left:696px;top:521.5px" width="7" height="10" viewBox="0 0 7 10" ><path d="M0.5 0.5 V9.5 L6.5 5 Z" fill="#8a8a8a"/></svg>
<div class="a" style="left:1.5px;top:543px;width:719px;height:21.8px;background:#131313;border-bottom-left-radius:9px;border-top:1px solid #262626"></div>
<div class="t" style="left:13.30px;top:549.11px;font-size:10.5px;color:#eeeeee;font-weight:400;font-family:'Liberation Sans';transform:scaleX(0.9);transform-origin:0 0;">Ready</div>
<svg style="left:60px;top:548px" width="15" height="13" viewBox="0 0 15 13" fill="none" stroke="#e6e6e6" stroke-width="1.2"><path d="M5.2 11.6 H0.6 V0.6 H13.8 V4.3"/><path d="M0.6 2.8 H13.8"/><path d="M1.8 5.6 H4.2 M1.8 8.4 H4.2" stroke-width="1.5"/><circle cx="9.5" cy="8.6" r="4.1"/><circle cx="9.5" cy="8.6" r="1.7" fill="#e6e6e6" stroke="none"/></svg>
<svg style="left:91px;top:547px" width="16" height="14" viewBox="0 0 16 14" fill="none" stroke="#e6e6e6" stroke-width="1.2"><circle cx="6.3" cy="2.3" r="1.5"/><path d="M1.2 3.4 C1.6 5.2 3.2 5.6 4.8 5.6 H7.8 C9.4 5.6 11 5.2 11.4 3.4"/><path d="M4.8 5.6 C4.9 8.5 4.4 10.5 3.3 13 M7.8 5.6 C7.7 7.2 7.6 8.2 8.6 9.6"/><path d="M7.9 10.9 L10 13 L14.9 8.6"/></svg>
<div class="t" style="left:109.70px;top:549.11px;font-size:10.5px;color:#eeeeee;font-weight:400;font-family:'Liberation Sans';transform:scaleX(0.98);transform-origin:0 0;">Accessibility: Good to go</div>
<div class="a" style="left:417.3px;top:543.5px;width:39.6px;height:20.5px;background:#212121;"></div>
<svg style="left:429.5px;top:547px" width="14" height="13" viewBox="0 0 14 13" fill="none" stroke="#f0f0f0" stroke-width="1.2"><rect x="0.6" y="0.6" width="12.6" height="11.6"/><path d="M4.8 0.6 V12.2 M9 0.6 V12.2 M0.6 4.5 H13.2 M0.6 8.4 H13.2"/></svg>
<svg style="left:470px;top:547px" width="15" height="13" viewBox="0 0 15 13" fill="none" stroke="#f0f0f0" stroke-width="1.2"><rect x="0.6" y="0.6" width="13.8" height="11.8"/><rect x="3.6" y="3.4" width="6.4" height="7"/><path d="M5 5.3 H8.6 M5 7 H8.6 M5 8.7 H8.6" stroke-width="0.9"/></svg>
<svg style="left:510px;top:547px" width="15" height="13" viewBox="0 0 15 13" fill="none" stroke="#f0f0f0" stroke-width="1.2"><rect x="0.6" y="0.6" width="13.8" height="11.8"/><path d="M9.2 0.6 V8.7 H0.6 M4.5 0.6 V6.5"/></svg>
<div class="a" style="left:543px;top:553px;width:7.5px;height:1.2px;background:#aaaaaa;"></div>
<div class="a" style="left:556px;top:553px;width:100px;height:1.5px;background:#bdbdbd;"></div>
<div class="a" style="left:603px;top:548px;width:6.2px;height:11.5px;background:#bdbdbd;border-radius:1px"></div>
<svg style="left:661px;top:550px" width="8" height="8" viewBox="0 0 8 8" fill="none" stroke="#cccccc" stroke-width="1.2"><path d="M4 0 V8 M0 4 H8"/></svg>
<div class="t" style="left:681.50px;top:549.44px;font-size:10.7px;color:#eeeeee;font-weight:400;font-family:'Liberation Sans';">100%</div>
</body></html>
